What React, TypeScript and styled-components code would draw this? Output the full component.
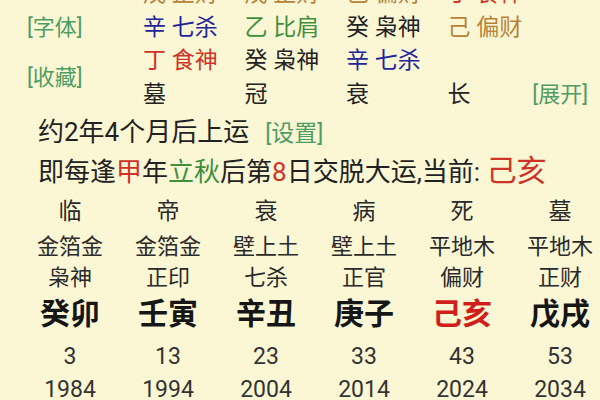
import React from "react";
import styled, { createGlobalStyle } from "styled-components";

const FONT = `Roboto, "Noto Sans CJK SC", sans-serif`;

const Global = createGlobalStyle`
  html, body { margin: 0; padding: 0; background: #fbf7d5; }
  body {
    font-family: ${FONT};
    color: #222;
    overflow: hidden;
  }
`;

const C = {
  bg: "#fbf7d5",
  green: "#4f9d63",
  blue: "#25259a",
  leaf: "#3f8f3f",
  earth: "#b7833a",
  red: "#cf3326",
  ink: "#222222",
};

const Page = styled.div`
  width: 600px;
  height: 400px;
  overflow: hidden;
  background: ${C.bg};
  font-family: ${FONT};
`;

const TopSection = styled.div`
  display: flex;
  margin-top: -23px;
  height: 134px;
`;

const LabelCol = styled.div`
  flex: 0 0 143px;
  box-sizing: border-box;
  padding-left: 27px;
  display: grid;
  grid-template-rows: repeat(4, 33.5px);
`;

const Label = styled.span<{ $rows: string }>`
  grid-row: ${(p) => p.$rows};
  align-self: center;
  color: ${C.green};
  font-size: 22px;
  line-height: 33.5px;
  white-space: nowrap;
`;

const HiddenGrid = styled.div`
  flex: 0 0 auto;
  display: grid;
  grid-template-columns: 101.5px 101.5px 101.5px 82px;
  grid-auto-rows: 33.5px;
  font-size: 23px;
  line-height: 33.5px;
`;

const Hidden = styled.span<{ $color: string }>`
  color: ${(p) => p.$color};
  white-space: pre;
`;

const Side = styled.div`
  flex: 1 1 auto;
  min-width: 0;
  display: flex;
  align-items: flex-end;
  justify-content: flex-end;
  padding-right: 12px;
`;

const Expand = styled.span`
  color: ${C.green};
  font-size: 22px;
  line-height: 33.5px;
  white-space: nowrap;
`;

const InfoLine = styled.div<{ $h: number }>`
  padding-left: 38px;
  height: ${(p) => p.$h}px;
  line-height: ${(p) => p.$h}px;
  font-size: 26px;
  color: ${C.ink};
  white-space: pre;
`;

const Setting = styled.span`
  color: ${C.green};
  font-size: 23px;
  margin-left: 16px;
`;

const Tint = styled.span<{ $color: string; $size?: number }>`
  color: ${(p) => p.$color};
  font-size: ${(p) => (p.$size ? `${p.$size}px` : "inherit")};
`;

const Cycle = styled.div`
  padding-left: 21px;
  margin-top: 5px;
`;

const CycleRow = styled.div<{ $h: number; $size: number; $weight?: number; $color?: string }>`
  display: grid;
  grid-template-columns: repeat(6, 98px);
  height: ${(p) => p.$h}px;
  line-height: ${(p) => p.$h}px;
  font-size: ${(p) => p.$size}px;
  font-weight: ${(p) => p.$weight ?? 400};
  color: ${(p) => p.$color ?? "#2a2a2a"};
  text-align: center;
  white-space: nowrap;
`;

const CycleCell = styled.span<{ $color?: string }>`
  color: ${(p) => p.$color ?? "inherit"};
`;

type H = { t: string; c: string } | null;

const hidden: H[][] = [
  [
    { t: "戊 正财", c: C.earth },
    { t: "戊 正财", c: C.earth },
    { t: "己 偏财", c: C.earth },
    { t: "丁 食神", c: C.red },
  ],
  [
    { t: "辛 七杀", c: C.blue },
    { t: "乙 比肩", c: C.leaf },
    { t: "癸 枭神", c: C.ink },
    { t: "己 偏财", c: C.earth },
  ],
  [
    { t: "丁 食神", c: C.red },
    { t: "癸 枭神", c: C.ink },
    { t: "辛 七杀", c: C.blue },
    null,
  ],
  [
    { t: "墓", c: C.ink },
    { t: "冠", c: C.ink },
    { t: "衰", c: C.ink },
    { t: "长", c: C.ink },
  ],
];

const stages = ["临", "帝", "衰", "病", "死", "墓"];
const nayin = ["金箔金", "金箔金", "壁上土", "壁上土", "平地木", "平地木"];
const gods = ["枭神", "正印", "七杀", "正官", "偏财", "正财"];
const pillars = ["癸卯", "壬寅", "辛丑", "庚子", "己亥", "戊戌"];
const ages = ["3", "13", "23", "33", "43", "53"];
const years = ["1984", "1994", "2004", "2014", "2024", "2034"];

export default function App() {
  return (
    <Page>
      <Global />
      <TopSection>
        <LabelCol>
          <Label $rows="2">[字体]</Label>
          <Label $rows="3 / 5">[收藏]</Label>
        </LabelCol>
        <HiddenGrid>
          {hidden.flat().map((h, i) =>
            h ? (
              <Hidden key={i} $color={h.c}>
                {h.t}
              </Hidden>
            ) : (
              <span key={i} />
            )
          )}
        </HiddenGrid>
        <Side>
          <Expand>[展开]</Expand>
        </Side>
      </TopSection>

      <InfoLine $h={42}>
        约2年4个月后上运<Setting>[设置]</Setting>
      </InfoLine>
      <InfoLine $h={36}>
        即每逢<Tint $color={C.red}>甲</Tint>年<Tint $color={C.leaf}>立秋</Tint>后第
        <Tint $color={C.red}>8</Tint>日交脱大运,当前: <Tint $color={C.red} $size={30}>己亥</Tint>
      </InfoLine>

      <Cycle>
        <CycleRow $h={36} $size={23}>
          {stages.map((s, i) => (
            <CycleCell key={i}>{s}</CycleCell>
          ))}
        </CycleRow>
        <CycleRow $h={34} $size={22}>
          {nayin.map((s, i) => (
            <CycleCell key={i}>{s}</CycleCell>
          ))}
        </CycleRow>
        <CycleRow $h={28} $size={22}>
          {gods.map((s, i) => (
            <CycleCell key={i}>{s}</CycleCell>
          ))}
        </CycleRow>
        <CycleRow $h={44} $size={30} $weight={700} $color="#161616">
          {pillars.map((s, i) => (
            <CycleCell key={i} $color={i === 4 ? "#d01f1a" : undefined}>
              {s}
            </CycleCell>
          ))}
        </CycleRow>
        <CycleRow $h={42} $size={23} $color="#333">
          {ages.map((s, i) => (
            <CycleCell key={i}>{s}</CycleCell>
          ))}
        </CycleRow>
        <CycleRow $h={24} $size={23} $color="#333">
          {years.map((s, i) => (
            <CycleCell key={i}>{s}</CycleCell>
          ))}
        </CycleRow>
      </Cycle>
    </Page>
  );
}
